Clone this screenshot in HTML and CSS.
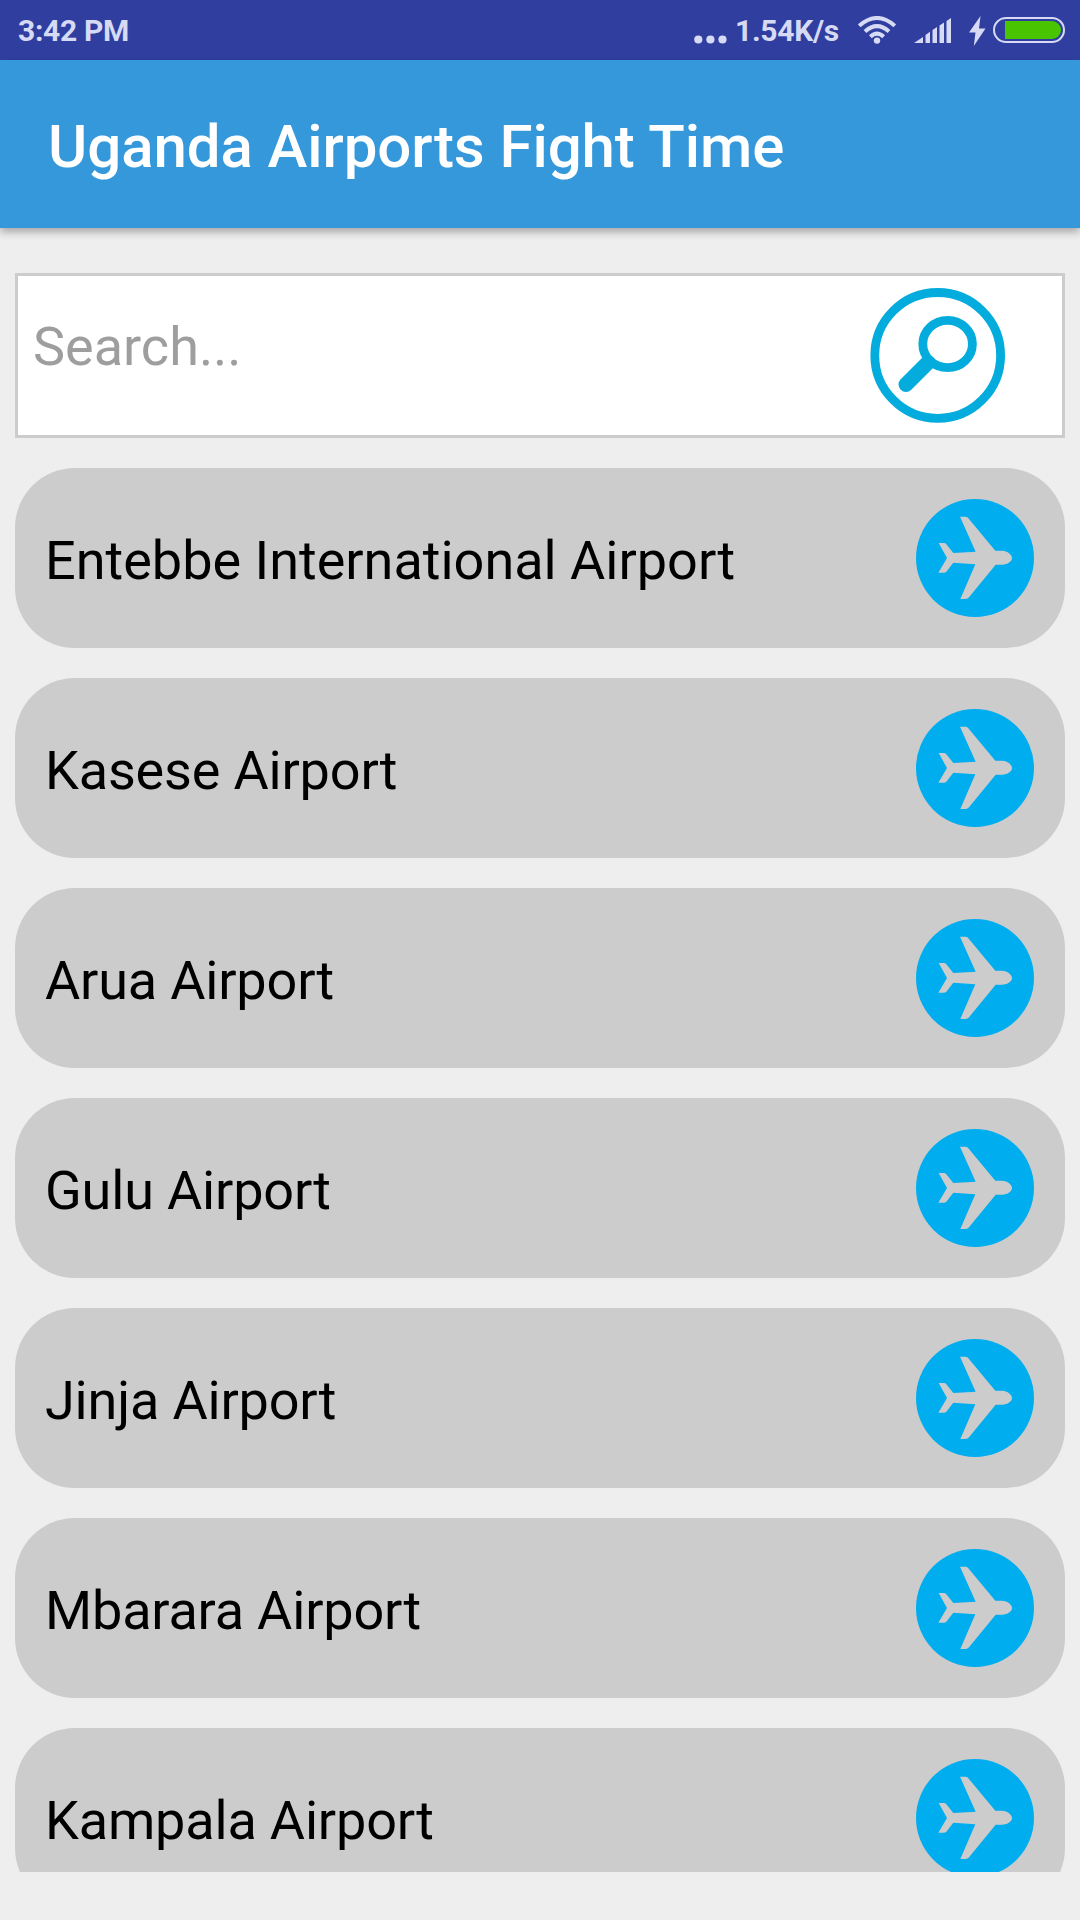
FILE: index.html
```html
<!DOCTYPE html>
<html>
	<head>
		<meta charset="utf-8">
		<title>Uganda Airports Fight Time</title>
		<link rel="stylesheet" href="styles.css">
	</head>
	<body>
	<svg class="defs">
		<symbol id="plane" viewBox="0 0 354 354">
			<circle class="disc" cx="177" cy="177" r="177"/>
			<path class="body" d="M132 53H149Q154 54 157 58L238 155H258C275 156 288 167 288 177C288 187 275 197 258 197H239L159 295Q155 300 149 300H133L178 196L112 191L91 218Q88 221 84 221H67L93 177L68 132H84Q88 132 91 136L112 162L179 158Z"/>
		</symbol>
	</svg>

	<div class="status">
		<span class="clock">3:42 PM</span>
		<svg class="dots" viewBox="0 0 33 9">
			<circle cx="4.3" cy="4.5" r="4.1"/>
			<circle cx="16.4" cy="4.5" r="4.1"/>
			<circle cx="28.5" cy="4.5" r="4.1"/>
		</svg>
		<span class="speed">1.54K/s</span>
		<svg class="wifi" viewBox="0 0 38 28">
			<path d="M1.2 9.8Q19 -5.8 36.8 9.8M7 15.4Q19 4.8 31 15.4M12.4 20.7Q19 14.5 25.6 20.7"/>
			<circle cx="19" cy="24.6" r="3.2"/>
		</svg>
		<svg class="signal" viewBox="0 0 38 26">
			<path d="M0 25L9 19V25ZM11.5 17L16 13.8V25H11.5ZM18.5 12L23 9V25H18.5ZM25.5 7.5L30 4.5V25H25.5ZM32.5 3L37 0V25H32.5Z"/>
		</svg>
		<svg class="bolt" viewBox="0 0 17 30">
			<path d="M11.5 0L0 16.5H6.5L4.8 30L16.5 12.5H10Z"/>
		</svg>
		<div class="battery"><div class="level"></div></div>
	</div>

	<div class="header">
		<h1>Uganda Airports Fight Time</h1>
	</div>

	<div class="search_box">
		<span class="hint">Search...</span>
		<svg class="search_icon" viewBox="0 0 135 135">
			<circle class="ring" cx="67.7" cy="67.4" r="62.9"/>
			<ellipse class="ring" cx="77.6" cy="56" rx="24.8" ry="23.6"/>
			<path d="M58 74.5L36 96.5"/>
		</svg>
	</div>

	<div class="list">
		<div class="item"><span>Entebbe International Airport</span><svg><use href="#plane"/></svg></div>
		<div class="item"><span>Kasese Airport</span><svg><use href="#plane"/></svg></div>
		<div class="item"><span>Arua Airport</span><svg><use href="#plane"/></svg></div>
		<div class="item"><span>Gulu Airport</span><svg><use href="#plane"/></svg></div>
		<div class="item"><span>Jinja Airport</span><svg><use href="#plane"/></svg></div>
		<div class="item"><span>Mbarara Airport</span><svg><use href="#plane"/></svg></div>
		<div class="item"><span>Kampala Airport</span><svg><use href="#plane"/></svg></div>
	</div>
	</body>
</html>
```
FILE: styles.css
```css
* {
  box-sizing: border-box;
}
html,
body {
  height: 100%;
}
body {
  margin: 0;
  background: #eeeeee;
  font-family: Roboto, sans-serif;
  display: flex;
  flex-direction: column;
  overflow: hidden;
}
svg {
  display: block;
  flex: none;
}
.defs {
  position: absolute;
  width: 0;
  height: 0;
}

/* status bar */
.status {
  height: 60px;
  flex: none;
  display: flex;
  align-items: center;
  padding: 0 15px 0 18px;
  background: #303f9f;
  color: #d6daf5;
  fill: #d6daf5;
  font-size: 30px;
  font-weight: 700;
  letter-spacing: -0.3px;
  white-space: nowrap;
}
.clock {
  margin-right: auto;
  padding-top: 1px;
}
.dots {
  width: 33px;
  height: 9px;
  margin: 18px 8px 0 0;
}
.speed {
  width: 106px;
  padding-top: 1px;
}
.wifi {
  width: 38px;
  height: 28px;
  margin-left: 17px;
}
.wifi path {
  fill: none;
  stroke: #d6daf5;
  stroke-width: 4;
}
.signal {
  width: 38px;
  height: 26px;
  margin: 2px 0 0 18px;
}
.bolt {
  width: 17px;
  height: 30px;
  margin: 1px 0 0 17px;
}
.battery {
  width: 72px;
  height: 26px;
  margin-left: 7px;
  border: 2px solid #d6daf5;
  border-radius: 13px;
  padding: 2px 2px 2px 10px;
}
.level {
  height: 18px;
  background: #48c400;
  border-radius: 0 9px 9px 0;
}

/* title bar */
.header {
  height: 168px;
  flex: none;
  display: flex;
  align-items: center;
  padding: 5px 48px 0;
  background: #3498db;
  box-shadow: 0 4px 8px rgba(0, 0, 0, 0.3);
}
h1 {
  margin: 0;
  color: #fff;
  font-size: 60px;
  font-weight: 500;
  letter-spacing: -0.07px;
}

.search_box {
  height: 165px;
  flex: none;
  display: flex;
  align-items: center;
  justify-content: space-between;
  margin: 45px 15px 30px;
  padding: 0 57px 0 15px;
  background: #fff;
  border: 3px solid #cccccc;
}
.hint {
  color: #9e9e9e;
  font-size: 54px;
  padding-bottom: 19px;
}
.search_icon {
  width: 135px;
  height: 135px;
  fill: none;
  stroke: #03acdc;
}
.search_icon .ring {
  stroke-width: 8.8;
}
.search_icon path {
  stroke-width: 15;
  stroke-linecap: round;
}

/* airports */
.list {
  height: 1404px;
  flex: none;
  overflow: hidden;
}
.item {
  height: 180px;
  display: flex;
  align-items: center;
  justify-content: space-between;
  margin: 0 15px 30px;
  padding: 0 31px 0 30px;
  background: #cccccc;
  border-radius: 60px;
  color: #000;
  font-size: 54px;
  letter-spacing: -0.17px;
}
.item:first-child {
  letter-spacing: 0;
}
.item span {
  padding-top: 4px;
}
.item svg {
  width: 118px;
  height: 118px;
}
.disc {
  fill: #00adef;
}
.body {
  fill: #cccccc;
}
```
